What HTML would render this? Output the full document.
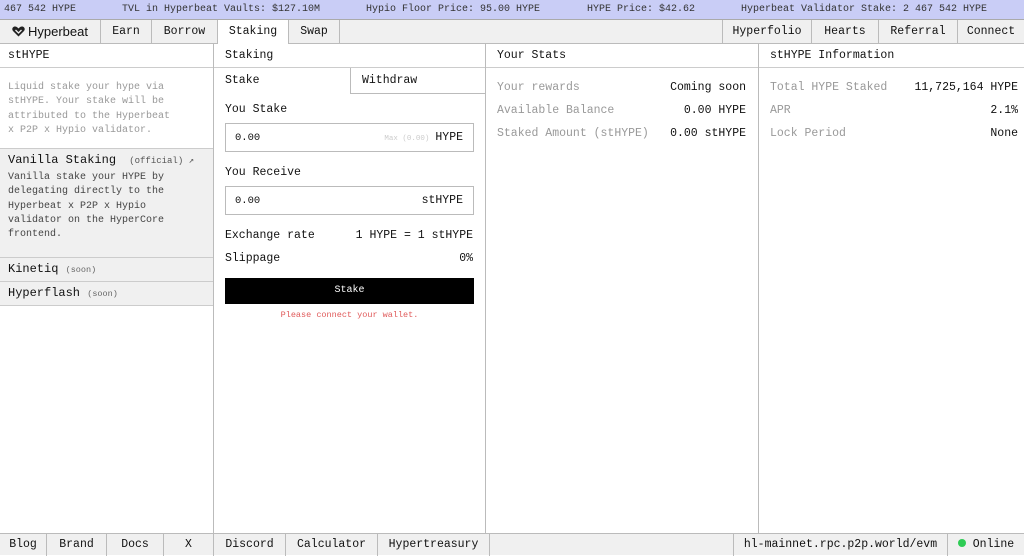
<!DOCTYPE html>
<html><head><meta charset="utf-8"><style>
*{box-sizing:border-box;margin:0;padding:0}
body{width:1024px;height:555px;overflow:hidden;background:#fff;font-family:"Liberation Mono","DejaVu Sans Mono",monospace;color:#111;position:relative}
.a{position:absolute;white-space:nowrap}
.top{left:0;top:0;width:1024px;height:20px;background:#c9cdf6;font-size:10px;line-height:20px;color:#333;border-bottom:1px solid #aaa}
.nav{left:0;top:20px;width:1024px;height:24px;background:#f0f0f0;border-bottom:1px solid #bbb}
.t{position:absolute;top:0;height:23px;line-height:23px;font-size:11.5px;text-align:center;border-right:1px solid #bbb}
.col{top:44px;bottom:22px;border-right:1px solid #bbb}
.hd{position:absolute;left:0;right:0;top:0;height:24px;border-bottom:1px solid #ccc;font-size:11.5px;line-height:23px;padding-left:8px}
.g{color:#999}
.foot{left:0;top:533px;width:1024px;height:22px;background:#f0f0f0;border-top:1px solid #bbb}
.f{position:absolute;top:0;height:22px;line-height:22px;font-size:11.5px;text-align:center;border-right:1px solid #bbb}
</style></head><body>
<div class="a top"><span class="a" style="left:4px">467 542 HYPE</span><span class="a" style="left:122px">TVL in Hyperbeat Vaults: $127.10M</span><span class="a" style="left:366px">Hypio Floor Price: 95.00 HYPE</span><span class="a" style="left:587px">HYPE Price: $42.62</span><span class="a" style="left:741px">Hyperbeat Validator Stake: 2 467 542 HYPE</span></div>
<div class="a nav">
<div class="t" style="left:0;width:101px;font-family:'Liberation Sans',sans-serif;font-size:13px"><svg width="13" height="11" viewBox="0 0 13 11" style="vertical-align:-1px;margin-right:3px"><path d="M6.5 10.5L1 5C-.5 3.3.5.5 3 .5c1.5 0 2.6 1 3.5 2C7.4 1.5 8.5.5 10 .5c2.5 0 3.5 2.8 2 4.5z" fill="#222"/><path d="M3.5 4l3 3 3-3" stroke="#f0f0f0" stroke-width="1.3" fill="none"/></svg>Hyperbeat</div>
<div class="t" style="left:101px;width:51px">Earn</div>
<div class="t" style="left:152px;width:66px">Borrow</div>
<div class="t" style="left:218px;width:71px;background:#fff;height:24px">Staking</div>
<div class="t" style="left:289px;width:51px">Swap</div>
<div class="t" style="left:722px;width:90px;border-left:1px solid #bbb">Hyperfolio</div>
<div class="t" style="left:812px;width:67px">Hearts</div>
<div class="t" style="left:879px;width:79px">Referral</div>
<div class="t" style="left:958px;width:66px;border-right:0">Connect</div>
</div>
<div class="a col" style="left:0;width:214px">
<div class="hd">stHYPE</div>
<div class="a g" style="left:8px;top:37px;font-size:10px;line-height:14.3px;white-space:normal;width:168px">Liquid stake your hype via stHYPE. Your stake will be attributed to the Hyperbeat x P2P x Hypio validator.</div>
<div class="a" style="left:0;top:104px;width:213px;height:110px;background:#f0f0f0;border-top:1px solid #ccc;border-bottom:1px solid #ccc"></div>
<div class="a" style="left:8px;top:109px;font-size:12px">Vanilla Staking <span style="font-size:9px;color:#555;margin-left:6px">(official) ↗</span></div>
<div class="a" style="left:8px;top:127px;font-size:10px;line-height:14.3px;white-space:normal;width:168px;color:#444">Vanilla stake your HYPE by delegating directly to the Hyperbeat x P2P x Hypio validator on the HyperCore frontend.</div>
<div class="a" style="left:0;top:214px;width:213px;height:24px;background:#f0f0f0;border-bottom:1px solid #ccc;font-size:12px;line-height:23px;padding-left:8px">Kinetiq <span style="font-size:8.5px;color:#666">(soon)</span></div>
<div class="a" style="left:0;top:238px;width:213px;height:24px;background:#f0f0f0;border-bottom:1px solid #ccc;font-size:12px;line-height:23px;padding-left:8px">Hyperflash <span style="font-size:8.5px;color:#666">(soon)</span></div>
</div>
<div class="a col" style="left:214px;width:272px">
<div class="hd" style="padding-left:11px">Staking</div>
<div class="a" style="left:11px;top:30px;font-size:11.5px">Stake</div>
<div class="a" style="left:136px;top:24px;width:136px;height:26px;border-left:1px solid #bbb;border-bottom:1px solid #bbb;font-size:11.5px;line-height:25px;padding-left:11px">Withdraw</div>
<div class="a" style="left:11px;top:59px;font-size:11.5px">You Stake</div>
<div class="a" style="left:11px;top:79px;width:249px;height:29px;border:1px solid #bbb;font-size:10.5px;line-height:28px;padding-left:9px">0.00<span style="position:absolute;right:10px;font-size:11.5px"><span style="font-size:7.5px;color:#ccc;margin-right:6px">Max (0.00)</span>HYPE</span></div>
<div class="a" style="left:11px;top:122px;font-size:11.5px">You Receive</div>
<div class="a" style="left:11px;top:142px;width:249px;height:29px;border:1px solid #bbb;font-size:10.5px;line-height:28px;padding-left:9px">0.00<span style="position:absolute;right:10px;font-size:11.5px">stHYPE</span></div>
<div class="a" style="left:11px;top:185px;font-size:11.5px">Exchange rate</div>
<div class="a" style="right:12px;top:185px;font-size:11.5px">1 HYPE = 1 stHYPE</div>
<div class="a" style="left:11px;top:208px;font-size:11.5px">Slippage</div>
<div class="a" style="right:12px;top:208px;font-size:11.5px">0%</div>
<div class="a" style="left:11px;top:234px;width:249px;height:26px;background:#000;color:#fff;font-size:10px;line-height:26px;text-align:center">Stake</div>
<div class="a" style="left:11px;top:266px;width:249px;text-align:center;font-size:8.5px;color:#e05a5a">Please connect your wallet.</div>
</div>
<div class="a col" style="left:486px;width:273px">
<div class="hd" style="padding-left:11px">Your Stats</div>
<div class="a g" style="left:11px;top:37px;font-size:11.5px">Your rewards</div><div class="a" style="right:12px;top:37px;font-size:11.5px">Coming soon</div>
<div class="a g" style="left:11px;top:60px;font-size:11.5px">Available Balance</div><div class="a" style="right:12px;top:60px;font-size:11.5px">0.00 HYPE</div>
<div class="a g" style="left:11px;top:83px;font-size:11.5px">Staked Amount (stHYPE)</div><div class="a" style="right:12px;top:83px;font-size:11.5px">0.00 stHYPE</div>
</div>
<div class="a col" style="left:759px;width:265px;border-right:0">
<div class="hd" style="padding-left:11px">stHYPE Information</div>
<div class="a g" style="left:11px;top:37px;font-size:11.5px">Total HYPE Staked</div><div class="a" style="right:6px;top:37px;font-size:11.5px">11,725,164 HYPE</div>
<div class="a g" style="left:11px;top:60px;font-size:11.5px">APR</div><div class="a" style="right:6px;top:60px;font-size:11.5px">2.1%</div>
<div class="a g" style="left:11px;top:83px;font-size:11.5px">Lock Period</div><div class="a" style="right:6px;top:83px;font-size:11.5px">None</div>
</div>
<div class="a foot">
<div class="f" style="left:0;width:47px">Blog</div>
<div class="f" style="left:47px;width:60px">Brand</div>
<div class="f" style="left:107px;width:57px">Docs</div>
<div class="f" style="left:164px;width:50px">X</div>
<div class="f" style="left:214px;width:72px">Discord</div>
<div class="f" style="left:286px;width:92px">Calculator</div>
<div class="f" style="left:378px;width:112px">Hypertreasury</div>
<div class="f" style="left:733px;width:215px;border-left:1px solid #bbb">hl-mainnet.rpc.p2p.world/evm</div>
<div class="f" style="left:948px;width:76px;border-right:0"><span style="display:inline-block;width:8px;height:8px;border-radius:50%;background:#2ecc55;margin-right:7px"></span>Online</div>
</div>
</body></html>
